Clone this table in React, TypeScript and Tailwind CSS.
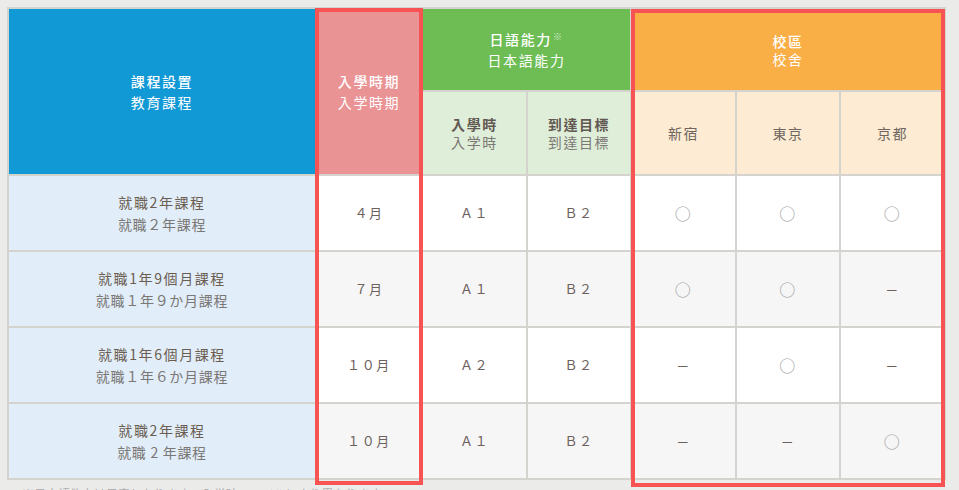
import React from "react";

type Row = {
  t1: string;
  t2: string;
  m: string;
  a: string;
  b: string;
  s: ("o" | "-")[];
  alt: boolean;
};

const rows: Row[] = [
  { t1: "就職2年課程", t2: "就職２年課程", m: "４月", a: "Ａ１", b: "Ｂ２", s: ["o", "o", "o"], alt: false },
  { t1: "就職1年9個月課程", t2: "就職１年９か月課程", m: "７月", a: "Ａ１", b: "Ｂ２", s: ["o", "o", "-"], alt: true },
  { t1: "就職1年6個月課程", t2: "就職１年６か月課程", m: "１０月", a: "Ａ２", b: "Ｂ２", s: ["-", "o", "-"], alt: false },
  { t1: "就職2年課程", t2: "就職 2 年課程", m: "１０月", a: "Ａ１", b: "Ｂ２", s: ["-", "-", "o"], alt: true },
];

function Mark({ v }: { v: "o" | "-" }) {
  if (v === "o") {
    return <span className="text-[16px] leading-none text-[#9a9a9a]">○</span>;
  }
  return <span className="text-[13px] leading-none text-[#6b605c]">－</span>;
}

export default function App() {
  return (
    <div
      className="relative min-h-screen h-[490px] overflow-hidden bg-[#ebebea] pl-[7px] pt-[7px]"
      style={{ fontFamily: '"Noto Sans CJK TC", "Noto Sans CJK JP", "Noto Sans", sans-serif' }}
    >
      <div className="grid w-[939px] grid-cols-[306px_104px_103px_102px_103px_102px_103px] grid-rows-[81px_82px_74px_74px_74px_74px] gap-[2px] bg-[#d5d3ce] p-[2px] tracking-[0.1em]">
        {/* header */}
        <div className="row-span-2 flex flex-col items-center justify-center bg-[#1199d6] text-[14px] leading-[21px] text-white">
          <span className="font-medium">課程設置</span>
          <span>教育課程</span>
        </div>
        <div className="row-span-2 flex flex-col items-center justify-center bg-[#ea9395] text-[14px] leading-[21px] text-white">
          <span className="font-medium">入學時期</span>
          <span>入学時期</span>
        </div>
        <div className="col-span-2 flex flex-col items-center justify-center bg-[#6dbd54] text-[14px] leading-[18px] text-white">
          <span className="font-medium">
            日語能力<span className="relative top-[-5px] ml-[1px] text-[9px] font-normal text-[#d5ecd0]">※</span>
          </span>
          <span>日本語能力</span>
        </div>
        <div className="col-span-3 flex flex-col items-center justify-center bg-[#faae46] text-[14px] leading-[18px] text-white">
          <span className="font-medium">校區</span>
          <span>校舍</span>
        </div>
        <div className="flex flex-col items-center justify-center bg-[#dfeed8] text-[14px] leading-[18px]">
          <span className="font-bold text-[#625852]">入學時</span>
          <span className="text-[#7c7875]">入学時</span>
        </div>
        <div className="flex flex-col items-center justify-center bg-[#dfeed8] text-[14px] leading-[18px]">
          <span className="font-bold text-[#625852]">到達目標</span>
          <span className="text-[#7c7875]">到達目標</span>
        </div>
        {["新宿", "東京", "京都"].map((c) => (
          <div key={c} className="flex items-center justify-center bg-[#fdebd3] text-[14px] text-[#6f6660]">
            {c}
          </div>
        ))}

        {/* body */}
        {rows.map((r, i) => {
          const bg = r.alt ? "bg-[#f6f6f6]" : "bg-white";
          return (
            <React.Fragment key={i}>
              <div className="flex flex-col items-center justify-center bg-[#e1edf9] text-[14px] leading-[22px]">
                <span className="text-[#6b5d50]">{r.t1}</span>
                <span className="tracking-[0.05em] text-[#7a7774]">{r.t2}</span>
              </div>
              <div className={`flex items-center justify-center ${bg} text-[13px] text-[#6b605c]`}>{r.m}</div>
              <div className={`flex items-center justify-center ${bg} text-[13px] text-[#6b605c]`}>{r.a}</div>
              <div className={`flex items-center justify-center ${bg} text-[13px] text-[#6b605c]`}>{r.b}</div>
              {r.s.map((v, j) => (
                <div key={j} className={`flex items-center justify-center ${bg}`}>
                  <Mark v={v} />
                </div>
              ))}
            </React.Fragment>
          );
        })}
      </div>

      <p className="mt-[5px] pl-[15px] text-[12px] leading-[18px] text-[#b0b0b0]">
        ※日本語能力は目安となります。入学時のレベルにより異なります。
      </p>

      {/* annotation frames */}
      <div className="pointer-events-none absolute left-[315px] top-[8px] h-[477px] w-[108px] border-4 border-[#f75354]" />
      <div className="pointer-events-none absolute left-[631px] top-[9px] h-[478px] w-[314px] border-4 border-[#f75354]" />
    </div>
  );
}
